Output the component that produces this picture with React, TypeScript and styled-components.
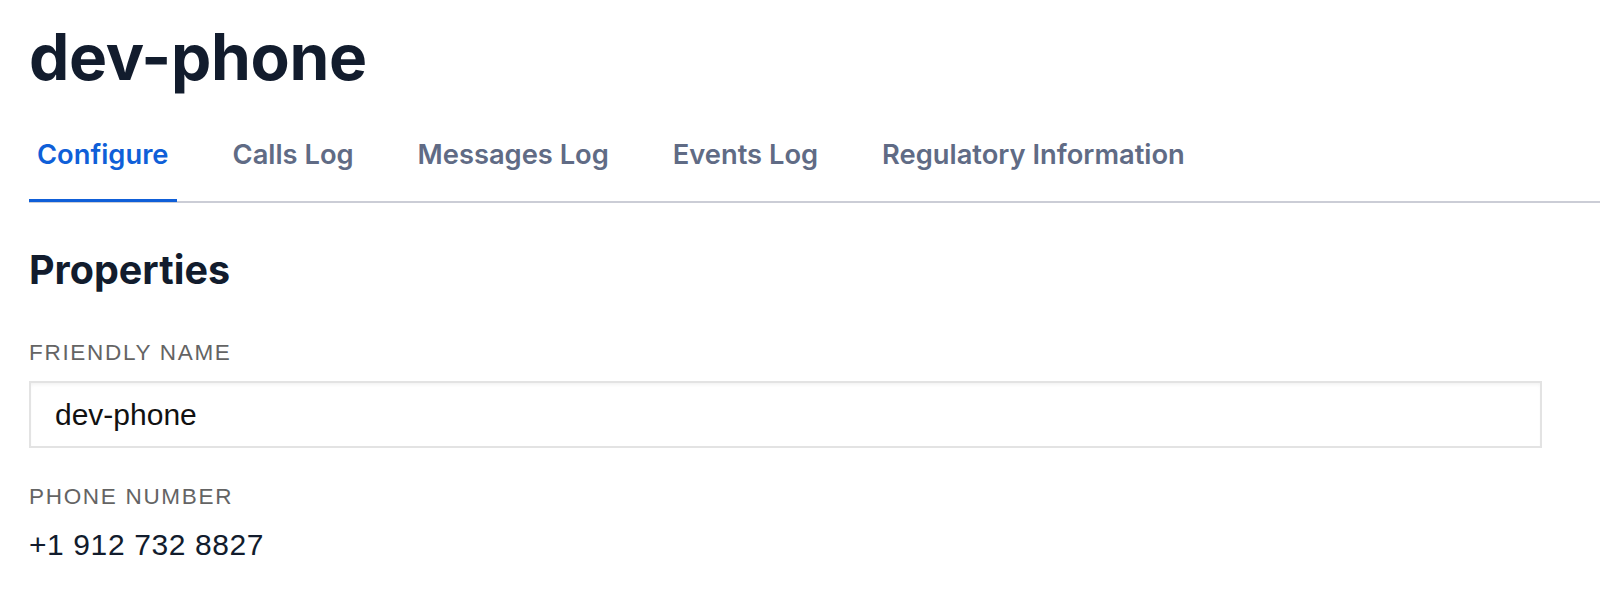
import { useState } from "react";
import styled, { createGlobalStyle } from "styled-components";

const GlobalStyle = createGlobalStyle`
  html, body {
    margin: 0;
    padding: 0;
    background: #ffffff;
  }
  body {
    font-family: Inter, "Noto Sans", sans-serif;
    color: #121c2d;
  }
`;

const tabs = [
  "Configure",
  "Calls Log",
  "Messages Log",
  "Events Log",
  "Regulatory Information",
];

const App = () => {
  const [active, setActive] = useState(0);

  return (
    <>
      <GlobalStyle />
      <Page>
        <Title>dev-phone</Title>
        <TabList>
          {tabs.map((label, i) => (
            <Tab key={label} $active={i === active} onClick={() => setActive(i)}>
              {label}
            </Tab>
          ))}
        </TabList>
        <SectionHeading>Properties</SectionHeading>
        <Field>
          <Label htmlFor="friendly-name">Friendly Name</Label>
          <TextInput id="friendly-name" defaultValue="dev-phone" />
        </Field>
        <Field $spaced>
          <Label as="div">Phone Number</Label>
          <Value>+1 912 732 8827</Value>
        </Field>
      </Page>
    </>
  );
};

export default App;

const Page = styled.div`
  padding: 18px 0 0 29px;
  display: flex;
  flex-direction: column;
  align-items: flex-start;
`;

const Title = styled.h1`
  margin: 0;
  font-family: Inter, sans-serif;
  font-size: 64px;
  line-height: 77px;
  font-weight: 700;
  color: #121c2d;
  letter-spacing: -0.3px;
`;

const TabList = styled.div`
  margin-top: 43px;
  align-self: stretch;
  display: flex;
  gap: 48px;
  border-bottom: 2px solid #cbcdd6;
`;

const Tab = styled.button<{ $active?: boolean }>`
  appearance: none;
  background: none;
  border: none;
  cursor: pointer;
  margin: 0 0 -1px 0;
  padding: 0 8px 28px;
  font-family: Inter, sans-serif;
  font-size: 27.3px;
  line-height: 33px;
  font-weight: 600;
  color: ${(p) => (p.$active ? "#0f5fd8" : "#606b85")};
  border-bottom: 3px solid ${(p) => (p.$active ? "#0f5fd8" : "transparent")};
`;

const SectionHeading = styled.h2`
  margin: 44px 0 0;
  font-family: Inter, sans-serif;
  font-size: 39.5px;
  line-height: 47px;
  font-weight: 700;
  color: #121c2d;
`;

const Field = styled.div<{ $spaced?: boolean }>`
  margin-top: ${(p) => (p.$spaced ? "36px" : "46px")};
  display: flex;
  flex-direction: column;
  align-items: flex-start;
`;

const Label = styled.label`
  display: block;
  font-family: "Liberation Sans", Arial, sans-serif;
  font-size: 22.5px;
  line-height: 26px;
  letter-spacing: 1.7px;
  text-transform: uppercase;
  color: #646464;
  margin-bottom: 15px;
`;

const TextInput = styled.input`
  box-sizing: border-box;
  width: 1513px;
  height: 67px;
  padding: 0 24px;
  border: 2px solid #e3e3e3;
  border-radius: 0;
  background: #ffffff;
  box-shadow: inset 0 3px 4px -2px rgba(0, 0, 0, 0.07);
  font-family: "Liberation Sans", Arial, sans-serif;
  font-size: 30px;
  color: #111111;
  outline: none;
`;

const Value = styled.div`
  margin-top: 3px;
  font-family: "Liberation Sans", Arial, sans-serif;
  font-size: 30px;
  line-height: 34px;
  letter-spacing: 0.6px;
  color: #121c2d;
`;
